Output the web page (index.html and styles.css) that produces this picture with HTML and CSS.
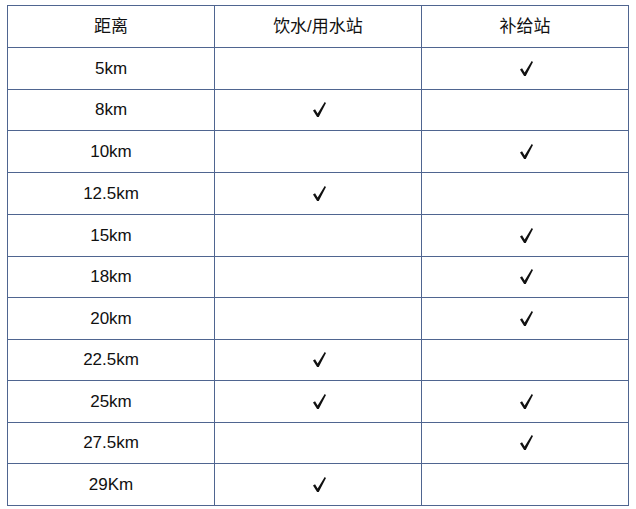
FILE: index.html
```html
<!DOCTYPE html>
<html lang="zh">
<head>
<meta charset="utf-8">
<link rel="stylesheet" href="styles.css">
</head>
<body>
<div class="sheet">
  <div class="cell">距离</div><div class="cell">饮水/用水站</div><div class="cell">补给站</div>
  <div class="cell">5km</div><div class="cell"></div><div class="cell"><svg class="ck" viewBox="0 0 14 16"><path d="M0 9 L2.2 7.8 L5 12.3 L12.6 0 L14 0.9 L6.2 16 L4.4 16 Z"/></svg></div>
  <div class="cell">8km</div><div class="cell"><svg class="ck" viewBox="0 0 14 16"><path d="M0 9 L2.2 7.8 L5 12.3 L12.6 0 L14 0.9 L6.2 16 L4.4 16 Z"/></svg></div><div class="cell"></div>
  <div class="cell">10km</div><div class="cell"></div><div class="cell"><svg class="ck" viewBox="0 0 14 16"><path d="M0 9 L2.2 7.8 L5 12.3 L12.6 0 L14 0.9 L6.2 16 L4.4 16 Z"/></svg></div>
  <div class="cell">12.5km</div><div class="cell"><svg class="ck" viewBox="0 0 14 16"><path d="M0 9 L2.2 7.8 L5 12.3 L12.6 0 L14 0.9 L6.2 16 L4.4 16 Z"/></svg></div><div class="cell"></div>
  <div class="cell">15km</div><div class="cell"></div><div class="cell"><svg class="ck" viewBox="0 0 14 16"><path d="M0 9 L2.2 7.8 L5 12.3 L12.6 0 L14 0.9 L6.2 16 L4.4 16 Z"/></svg></div>
  <div class="cell">18km</div><div class="cell"></div><div class="cell"><svg class="ck" viewBox="0 0 14 16"><path d="M0 9 L2.2 7.8 L5 12.3 L12.6 0 L14 0.9 L6.2 16 L4.4 16 Z"/></svg></div>
  <div class="cell">20km</div><div class="cell"></div><div class="cell"><svg class="ck" viewBox="0 0 14 16"><path d="M0 9 L2.2 7.8 L5 12.3 L12.6 0 L14 0.9 L6.2 16 L4.4 16 Z"/></svg></div>
  <div class="cell">22.5km</div><div class="cell"><svg class="ck" viewBox="0 0 14 16"><path d="M0 9 L2.2 7.8 L5 12.3 L12.6 0 L14 0.9 L6.2 16 L4.4 16 Z"/></svg></div><div class="cell"></div>
  <div class="cell">25km</div><div class="cell"><svg class="ck" viewBox="0 0 14 16"><path d="M0 9 L2.2 7.8 L5 12.3 L12.6 0 L14 0.9 L6.2 16 L4.4 16 Z"/></svg></div><div class="cell"><svg class="ck" viewBox="0 0 14 16"><path d="M0 9 L2.2 7.8 L5 12.3 L12.6 0 L14 0.9 L6.2 16 L4.4 16 Z"/></svg></div>
  <div class="cell">27.5km</div><div class="cell"></div><div class="cell"><svg class="ck" viewBox="0 0 14 16"><path d="M0 9 L2.2 7.8 L5 12.3 L12.6 0 L14 0.9 L6.2 16 L4.4 16 Z"/></svg></div>
  <div class="cell">29Km</div><div class="cell"><svg class="ck" viewBox="0 0 14 16"><path d="M0 9 L2.2 7.8 L5 12.3 L12.6 0 L14 0.9 L6.2 16 L4.4 16 Z"/></svg></div><div class="cell"></div>
</div>
</body>
</html>
```
FILE: styles.css
```css
html, body {
  margin: 0;
  padding: 0;
  background: #ffffff;
}
body {
  padding: 5px 0 0 7px;
  font-family: "Liberation Sans", "Noto Sans CJK SC", Arial, sans-serif;
  font-size: 17px;
  color: #111111;
}
.sheet {
  display: grid;
  grid-template-columns: 206px 206px 206px;
  grid-template-rows: 41px 41px 40px 41px 41px 41px 40px 41px 40px 41px 40px 41px;
  gap: 1px;
  padding: 1px;
  width: max-content;
  background: #4f6590;
}
.cell {
  background: #ffffff;
  display: flex;
  align-items: center;
  justify-content: center;
  line-height: 1;
  padding-bottom: 1px;
}
.ck {
  width: 13px;
  height: 15px;
  fill: #111111;
  margin-left: 2px;
}
```
